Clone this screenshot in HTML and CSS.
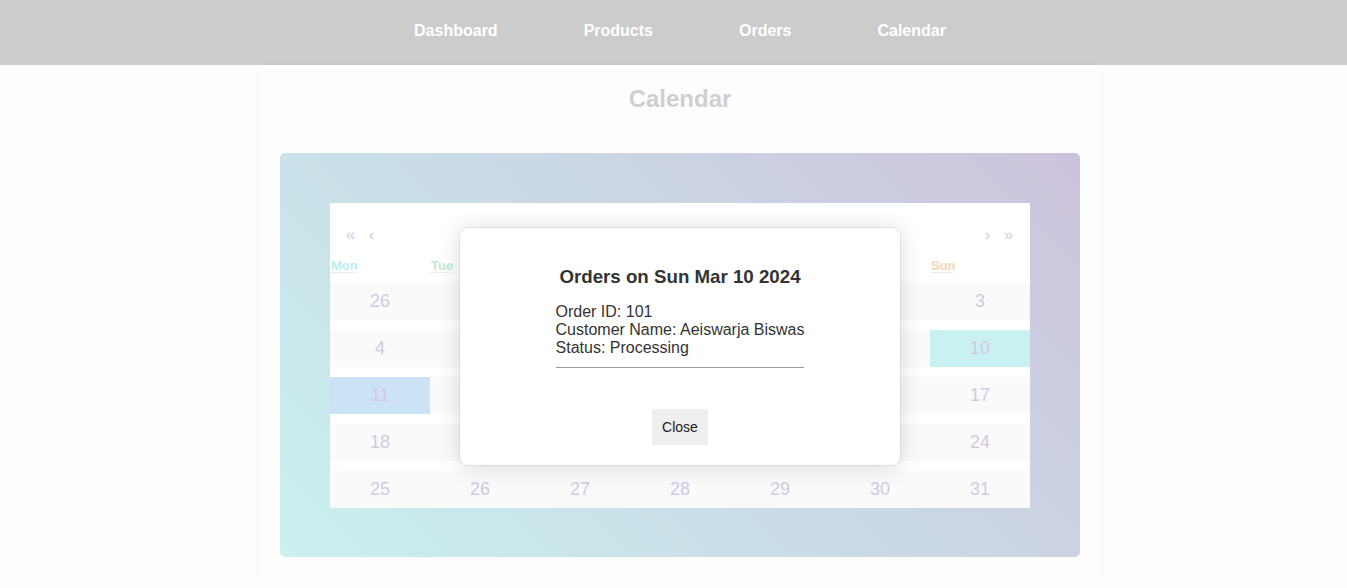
FILE: index.html
```html
<!DOCTYPE html>
<html lang="en">
<head>
<meta charset="utf-8">
<title>Calendar</title>
<link rel="stylesheet" href="styles.css">
</head>
<body>
<nav class="topnav">
  <a class="nav-link" href="#">Dashboard</a>
  <a class="nav-link" href="#">Products</a>
  <a class="nav-link" href="#">Orders</a>
  <a class="nav-link" href="#">Calendar</a>
</nav>
<main class="page">
  <h2 class="page-title">Calendar</h2>
  <div class="grad-box">
    <div class="calendar">
      <div class="cal-nav">
        <div class="cal-nav-group">
          <button class="cal-arrow">«</button>
          <button class="cal-arrow">‹</button>
        </div>
        <div class="cal-nav-group">
          <button class="cal-arrow">›</button>
          <button class="cal-arrow">»</button>
        </div>
      </div>
      <div class="weekdays">
        <div class="wd"><abbr class="wd-mon">Mon</abbr></div>
        <div class="wd"><abbr class="wd-tue">Tue</abbr></div>
        <div class="wd"><abbr class="wd-wed">Wed</abbr></div>
        <div class="wd"><abbr class="wd-thu">Thu</abbr></div>
        <div class="wd"><abbr class="wd-fri">Fri</abbr></div>
        <div class="wd"><abbr class="wd-sat">Sat</abbr></div>
        <div class="wd"><abbr class="wd-sun">Sun</abbr></div>
      </div>
      <div class="days">
        <div class="tile">26</div><div class="tile">27</div><div class="tile">28</div><div class="tile">29</div><div class="tile">1</div><div class="tile">2</div><div class="tile">3</div>
        <div class="tile">4</div><div class="tile">5</div><div class="tile">6</div><div class="tile">7</div><div class="tile">8</div><div class="tile">9</div><div class="tile tile-active">10</div>
        <div class="tile tile-now">11</div><div class="tile">12</div><div class="tile">13</div><div class="tile">14</div><div class="tile">15</div><div class="tile">16</div><div class="tile">17</div>
        <div class="tile">18</div><div class="tile">19</div><div class="tile">20</div><div class="tile">21</div><div class="tile">22</div><div class="tile">23</div><div class="tile">24</div>
        <div class="tile">25</div><div class="tile">26</div><div class="tile">27</div><div class="tile">28</div><div class="tile">29</div><div class="tile">30</div><div class="tile">31</div>
      </div>
    </div>
  </div>
</main>
<div class="modal">
  <h3 class="modal-title">Orders on Sun Mar 10 2024</h3>
  <div class="orders">
    <div class="order">
      <div>Order ID: 101</div>
      <div>Customer Name: Aeiswarja Biswas</div>
      <div>Status: Processing</div>
      <hr class="order-sep">
    </div>
  </div>
  <div class="modal-actions">
    <button class="close-btn">Close</button>
  </div>
</div>
</body>
</html>
```
FILE: styles.css
```css
html {
  overflow-x: hidden;
}
body {
  margin: 0;
  width: 1360px;
  position: relative;
  background: #fdfdfd;
  font-family: "Liberation Sans", Arial, sans-serif;
  overflow-x: hidden;
}
.topnav {
  height: 65px;
  background: #cccccc;
  display: flex;
  justify-content: center;
  align-items: flex-start;
  gap: 86px;
  box-sizing: border-box;
  padding-top: 22px;
}
.nav-link {
  color: #ffffff;
  font-weight: bold;
  font-size: 16px;
  line-height: 18px;
  text-decoration: none;
}
.page {
  width: 800px;
  margin: 0 auto;
  padding: 20px 20px 20px;
  background: #fdfdfd;
  box-shadow: 0 0 4px rgba(0, 0, 0, 0.035);
}
.page-title {
  margin: 0 0 40px;
  text-align: center;
  font-size: 24px;
  line-height: 28px;
  color: #cfcfcf;
}
.grad-box {
  border-radius: 5px;
  padding: 50px 50px 49px;
  background: linear-gradient(45deg, #c9f1ef, #ccc3dc);
}
.calendar {
  background: #ffffff;
  padding-top: 10px;
}
.cal-nav {
  height: 44px;
  display: flex;
  justify-content: space-between;
  align-items: center;
  padding: 0 11px 0 10px;
}
.cal-nav-group {
  display: flex;
}
.cal-arrow {
  width: 21px;
  padding: 0;
  border: 0;
  background: transparent;
  font-family: "Liberation Sans", Arial, sans-serif;
  font-size: 17px;
  line-height: 20px;
  color: #d4cce2;
}
.weekdays {
  height: 26px;
  display: grid;
  grid-template-columns: repeat(7, 100px);
}
.wd {
  padding-left: 1px;
  font-size: 13px;
  font-weight: bold;
  line-height: 17px;
}
.wd abbr {
  text-decoration: underline dotted;
  text-underline-offset: 2px;
  text-decoration-thickness: 1px;
}
.wd-mon { color: #b9eef0; }
.wd-tue { color: #c2ecd2; }
.wd-wed { color: #c8e4f0; }
.wd-thu { color: #d8d0ec; }
.wd-fri { color: #f0d0e0; }
.wd-sat { color: #f4d8c8; }
.wd-sun { color: #f6d5b9; }
.days {
  display: grid;
  grid-template-columns: repeat(7, 100px);
  grid-auto-rows: 37px;
  row-gap: 10px;
}
.tile {
  background: #fafafa;
  color: #d4c8e3;
  font-size: 18px;
  display: flex;
  align-items: center;
  justify-content: center;
}
.tile-active {
  background: #c9f1f1;
}
.tile-now {
  background: #cce3f5;
}
.modal {
  position: absolute;
  top: 228px;
  left: 50%;
  transform: translateX(-50%);
  width: 440px;
  box-sizing: border-box;
  padding: 38px 20px 20px;
  background: #ffffff;
  border-radius: 8px;
  box-shadow: 0 0 0 1px rgba(0, 0, 0, 0.06), 0 2px 22px rgba(0, 0, 0, 0.16);
  text-align: center;
  color: #333333;
}
.modal-title {
  margin: 0 0 15px;
  font-size: 18.72px;
  line-height: 22px;
  font-weight: bold;
  color: #333333;
}
.orders {
  display: flex;
  justify-content: center;
}
.order {
  text-align: left;
  font-size: 16px;
  line-height: 18px;
}
.order-sep {
  margin: 10px 0 0;
  height: 0;
  border: 0;
  border-top: 1px solid #9a9a9a;
}
.modal-actions {
  margin-top: 41px;
  display: flex;
  justify-content: center;
}
.close-btn {
  border: 0;
  background: #efefef;
  padding: 10px 10px;
  font-family: "Liberation Sans", Arial, sans-serif;
  font-size: 14px;
  line-height: 16px;
  color: #222222;
}
```
